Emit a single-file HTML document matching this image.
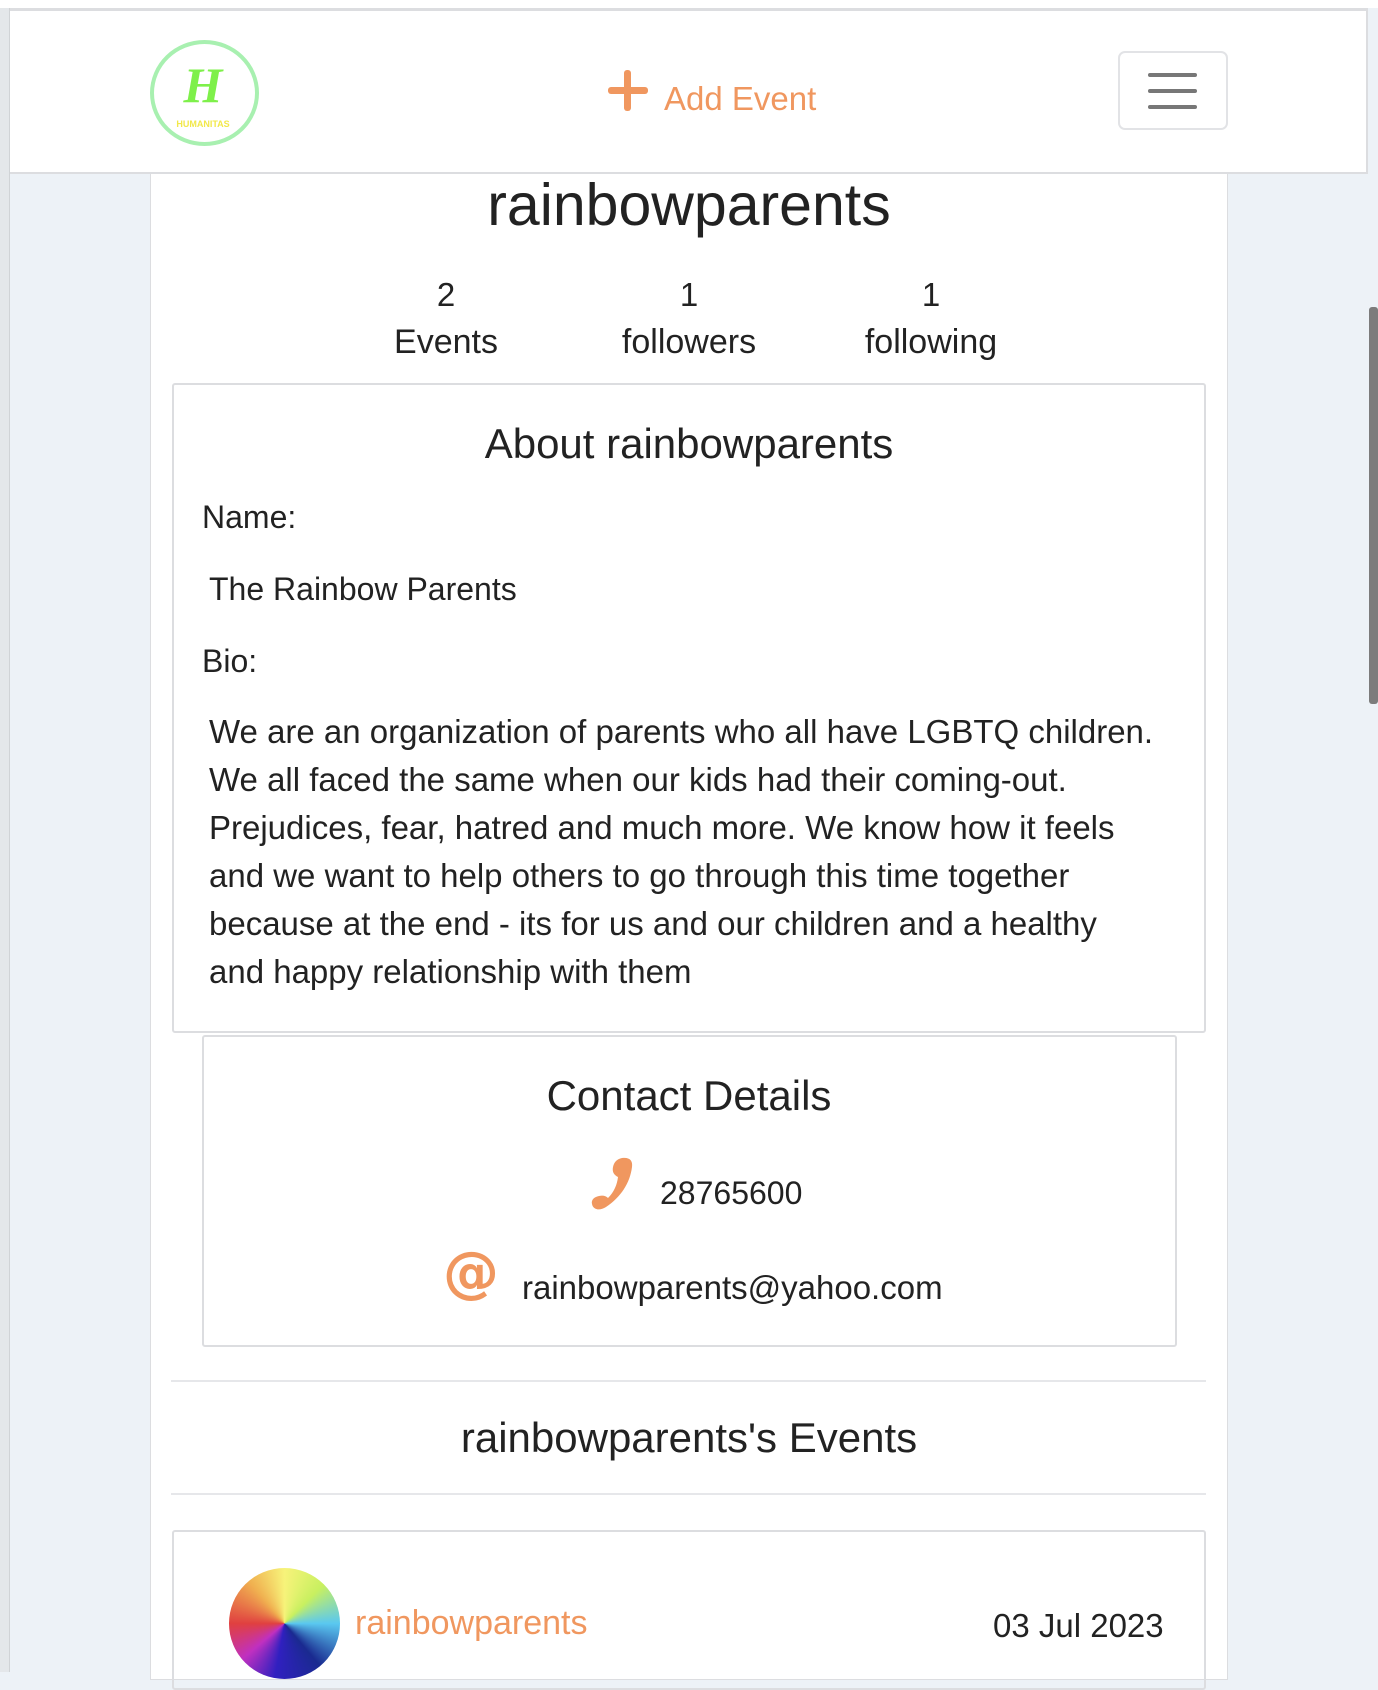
<!DOCTYPE html>
<html><head><meta charset="utf-8"><style>
*{margin:0;padding:0;box-sizing:border-box}
body{width:1378px;height:1672px;overflow:hidden;background:#edf2f7;font-family:"Liberation Sans",sans-serif;color:#222;position:relative}
.a{position:absolute}
.t{position:absolute;white-space:nowrap;line-height:1}
.c{transform:translateX(-50%)}
</style></head><body>
<div class="a" style="left:0;top:0;width:1378px;height:8px;background:#fff"></div>
<div class="a" style="left:0;top:8px;width:10px;height:1664px;background:#e4e7ea;border-right:1px solid #d0d3d6"></div>
<div class="a" style="left:150px;top:160px;width:1078px;height:1520px;background:#fff;border:1px solid #dcdde0"></div>
<div class="a" style="left:10px;top:8px;width:1358px;height:166px;background:#fff;border-top:3px solid #dcdde0;border-bottom:2px solid #dcdde0;border-right:2px solid #dcdde0"></div>
<div class="a" style="left:150px;top:40px;width:109px;height:106px;border:4px solid #a8f0b0;border-radius:50%"></div>
<div class="t c" style="left:203px;top:60px;font-family:'Liberation Serif',serif;font-style:italic;font-weight:bold;font-size:50px;color:#7ef04a">H</div>
<div class="t c" style="left:203px;top:120px;font-size:9px;font-weight:bold;color:#f2e84a">HUMANITAS</div>
<div class="a" style="left:608px;top:87px;width:40px;height:7px;background:#f0975f;border-radius:3px"></div>
<div class="a" style="left:624px;top:70px;width:7px;height:41px;background:#f0975f;border-radius:3px"></div>
<div class="t" style="left:664px;top:82px;font-size:33px;color:#f0975f">Add Event</div>
<div class="a" style="left:1118px;top:51px;width:110px;height:79px;border:2px solid #e2e3e6;border-radius:7px"></div>
<div class="a" style="left:1148px;top:73px;width:49px;height:4px;background:#777;border-radius:2px"></div>
<div class="a" style="left:1148px;top:89px;width:49px;height:4px;background:#777;border-radius:2px"></div>
<div class="a" style="left:1148px;top:105px;width:49px;height:4px;background:#777;border-radius:2px"></div>
<div class="a" style="left:1369px;top:307px;width:9px;height:397px;background:#7c7c7c;border-radius:3px"></div>

<div class="t c" style="left:689px;top:176px;font-size:59px;color:#222">rainbowparents</div>
<div class="t c" style="left:446px;top:278px;font-size:33px">2</div>
<div class="t c" style="left:689px;top:278px;font-size:33px">1</div>
<div class="t c" style="left:931px;top:278px;font-size:33px">1</div>
<div class="t c" style="left:446px;top:325px;font-size:34px">Events</div>
<div class="t c" style="left:689px;top:325px;font-size:34px">followers</div>
<div class="t c" style="left:931px;top:325px;font-size:34px">following</div>

<div class="a" style="left:172px;top:383px;width:1034px;height:650px;border:2px solid #dcdde0;border-radius:3px"></div>
<div class="t c" style="left:689px;top:423px;font-size:42px">About rainbowparents</div>
<div class="t" style="left:202px;top:501px;font-size:32px">Name:</div>
<div class="t" style="left:209px;top:573px;font-size:32px">The Rainbow Parents</div>
<div class="t" style="left:202px;top:645px;font-size:32px">Bio:</div>
<div class="t" style="left:209px;top:718px;font-size:33px;line-height:48px;margin-top:-10px">We are an organization of parents who all have LGBTQ children.<br>We all faced the same when our kids had their coming-out.<br>Prejudices, fear, hatred and much more. We know how it feels<br>and we want to help others to go through this time together<br>because at the end - its for us and our children and a healthy<br>and happy relationship with them</div>

<div class="a" style="left:202px;top:1035px;width:975px;height:312px;border:2px solid #dcdde0;border-radius:3px"></div>
<div class="t c" style="left:689px;top:1075px;font-size:42px">Contact Details</div>
<svg class="a" style="left:584px;top:1156px" width="56" height="56" viewBox="0 0 56 56"><path d="M38 2c7-1 11 2 10 9-2 16-11 30-26 40-6 4-13 3-14-3-1-4 2-7 7-8 4-1 7 0 9 2 6-6 9-13 10-21-4-2-6-5-5-10 1-5 4-8 9-9z" fill="#f0975f"/></svg>
<div class="t" style="left:660px;top:1177px;font-size:32px">28765600</div>
<div class="t" style="left:443px;top:1245px;font-family:'DejaVu Sans',sans-serif;font-size:56px;font-weight:bold;color:#f0975f">@</div>
<div class="t" style="left:522px;top:1271px;font-size:33px">rainbowparents@yahoo.com</div>

<div class="a" style="left:171px;top:1380px;width:1035px;height:2px;background:#e6e7ea"></div>
<div class="t c" style="left:689px;top:1417px;font-size:42px">rainbowparents's Events</div>
<div class="a" style="left:171px;top:1493px;width:1035px;height:2px;background:#e6e7ea"></div>

<div class="a" style="left:172px;top:1530px;width:1034px;height:160px;border:2px solid #dcdde0;border-radius:3px"></div>
<div class="a" style="left:229px;top:1568px;width:111px;height:111px;border-radius:50%;background:conic-gradient(#f7f37a 0deg,#c8f060 45deg,#5ac8f0 90deg,#1a2a90 140deg,#3020c0 190deg,#c030c0 230deg,#e04040 270deg,#f0b050 320deg,#f7f37a 360deg)"></div>
<div class="t" style="left:355px;top:1606px;font-size:34px;color:#f0975f">rainbowparents</div>
<div class="t" style="left:993px;top:1609px;font-size:33px">03 Jul 2023</div>
</body></html>
